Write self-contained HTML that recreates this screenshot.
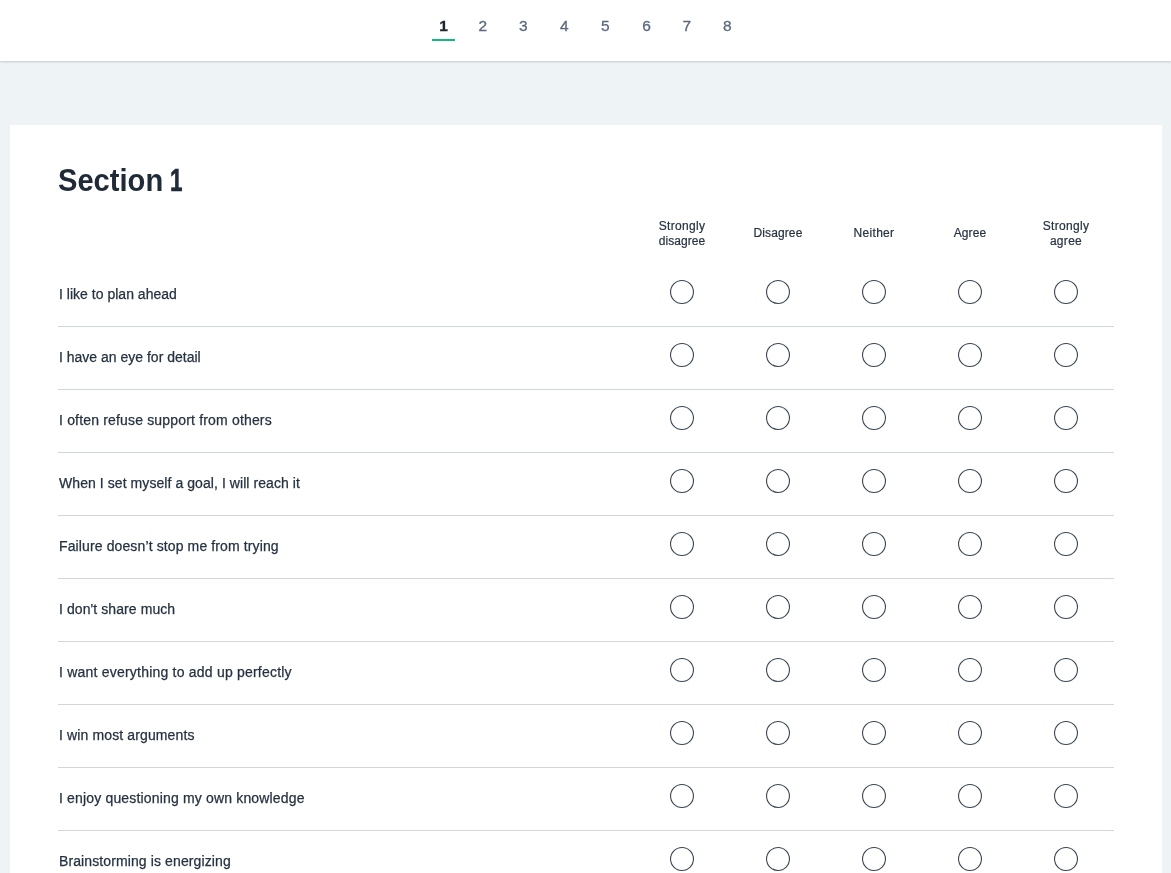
<!DOCTYPE html>
<html lang="en">
<head>
<meta charset="utf-8">
<title>Section 1</title>
<style>
*{box-sizing:border-box;margin:0;padding:0}
html,body{width:100%;height:100%}
body{background:#eef3f6;font-family:"Liberation Sans",Arial,sans-serif;color:#253241;overflow:hidden;position:relative}
.top{position:absolute;left:0;top:0;width:100%;height:61px;background:#fff;box-shadow:0 1px 2px rgba(0,0,0,.18)}
.nav{position:absolute;left:0;top:0;height:61px;width:100%;will-change:transform}
.nav a{position:absolute;top:16px;height:20px;line-height:20px;font-size:15.5px;color:#5a6a7e;text-align:center;text-decoration:none;width:30px;margin-left:-15px;-webkit-text-stroke:.3px currentColor}
.nav a.on{color:#1d2733;font-weight:bold}
.nav i{position:absolute;left:432px;top:39px;width:23px;height:2px;background:#10b981}
.gl{position:absolute;left:0;top:0;width:100%;height:100%;will-change:transform}
.card{position:absolute;left:10px;top:125px;width:1152px;height:900px;background:#fff}
h1{position:absolute;left:48px;top:36px;font-size:32px;line-height:38px;font-weight:bold;color:#212b38;white-space:nowrap;}
h1 span{display:inline-block;transform-origin:0 0}
h1 .sa{transform:scaleX(.91)}
h1 .sb{transform:scaleX(.7);margin-left:-12px;-webkit-text-stroke:.7px #212b38}
.cols{position:absolute;left:0;top:0}
.cols span{position:absolute;width:96px;margin-left:-48px;text-align:center;font-size:12px;line-height:15px;letter-spacing:.3px;color:#253241;-webkit-text-stroke:.2px #253241}
.cols em{font-style:normal}
.row{position:absolute;left:48px;width:1056px;height:63px;border-bottom:1px solid #cfd6de}
.row p{position:absolute;left:1px;top:20px;font-size:14px;line-height:20px;white-space:nowrap;color:#253241;-webkit-text-stroke:.25px #253241}
.row svg{position:absolute;left:611px;top:15px;fill:none;stroke:#394653;stroke-width:1.1}
</style>
</head>
<body>
<div class="top">
  <div class="nav">
    <a class="on" style="left:443.5px">1</a>
    <a style="left:482.8px">2</a>
    <a style="left:523.4px">3</a>
    <a style="left:564.3px">4</a>
    <a style="left:605.2px">5</a>
    <a style="left:646.5px">6</a>
    <a style="left:686.7px">7</a>
    <a style="left:727.3px">8</a>
    <i></i>
  </div>
</div>
<div class="card"><div class="gl">
  <h1><span class="sa">Section</span> <span class="sb">1</span></h1>
  <div class="cols">
    <span style="left:672px;top:94px">Strongly<br><em style="letter-spacing:.05px">disagree</em></span>
    <span style="left:768px;top:100.5px;letter-spacing:.1px">Disagree</span>
    <span style="left:864px;top:100.5px">Neither</span>
    <span style="left:960px;top:100.5px;letter-spacing:.1px">Agree</span>
    <span style="left:1056px;top:94px">Strongly<br>agree</span>
  </div>
  <div class="row" style="top:139px"><p style="letter-spacing:0.016px">I like to plan ahead</p><svg width="480" height="26" viewBox="0 0 480 26"><circle cx="13" cy="13" r="11.45"/><circle cx="109" cy="13" r="11.45"/><circle cx="205" cy="13" r="11.45"/><circle cx="301" cy="13" r="11.45"/><circle cx="397" cy="13" r="11.45"/></svg></div>
  <div class="row" style="top:202px"><p style="letter-spacing:0.000px">I have an eye for detail</p><svg width="480" height="26" viewBox="0 0 480 26"><circle cx="13" cy="13" r="11.45"/><circle cx="109" cy="13" r="11.45"/><circle cx="205" cy="13" r="11.45"/><circle cx="301" cy="13" r="11.45"/><circle cx="397" cy="13" r="11.45"/></svg></div>
  <div class="row" style="top:265px"><p style="letter-spacing:0.173px">I often refuse support from others</p><svg width="480" height="26" viewBox="0 0 480 26"><circle cx="13" cy="13" r="11.45"/><circle cx="109" cy="13" r="11.45"/><circle cx="205" cy="13" r="11.45"/><circle cx="301" cy="13" r="11.45"/><circle cx="397" cy="13" r="11.45"/></svg></div>
  <div class="row" style="top:328px"><p style="letter-spacing:0.070px">When I set myself a goal, I will reach it</p><svg width="480" height="26" viewBox="0 0 480 26"><circle cx="13" cy="13" r="11.45"/><circle cx="109" cy="13" r="11.45"/><circle cx="205" cy="13" r="11.45"/><circle cx="301" cy="13" r="11.45"/><circle cx="397" cy="13" r="11.45"/></svg></div>
  <div class="row" style="top:391px"><p style="letter-spacing:0.121px">Failure doesn’t stop me from trying</p><svg width="480" height="26" viewBox="0 0 480 26"><circle cx="13" cy="13" r="11.45"/><circle cx="109" cy="13" r="11.45"/><circle cx="205" cy="13" r="11.45"/><circle cx="301" cy="13" r="11.45"/><circle cx="397" cy="13" r="11.45"/></svg></div>
  <div class="row" style="top:454px"><p style="letter-spacing:0.082px">I don't share much</p><svg width="480" height="26" viewBox="0 0 480 26"><circle cx="13" cy="13" r="11.45"/><circle cx="109" cy="13" r="11.45"/><circle cx="205" cy="13" r="11.45"/><circle cx="301" cy="13" r="11.45"/><circle cx="397" cy="13" r="11.45"/></svg></div>
  <div class="row" style="top:517px"><p style="letter-spacing:0.214px">I want everything to add up perfectly</p><svg width="480" height="26" viewBox="0 0 480 26"><circle cx="13" cy="13" r="11.45"/><circle cx="109" cy="13" r="11.45"/><circle cx="205" cy="13" r="11.45"/><circle cx="301" cy="13" r="11.45"/><circle cx="397" cy="13" r="11.45"/></svg></div>
  <div class="row" style="top:580px"><p style="letter-spacing:0.126px">I win most arguments</p><svg width="480" height="26" viewBox="0 0 480 26"><circle cx="13" cy="13" r="11.45"/><circle cx="109" cy="13" r="11.45"/><circle cx="205" cy="13" r="11.45"/><circle cx="301" cy="13" r="11.45"/><circle cx="397" cy="13" r="11.45"/></svg></div>
  <div class="row" style="top:643px"><p style="letter-spacing:0.166px">I enjoy questioning my own knowledge</p><svg width="480" height="26" viewBox="0 0 480 26"><circle cx="13" cy="13" r="11.45"/><circle cx="109" cy="13" r="11.45"/><circle cx="205" cy="13" r="11.45"/><circle cx="301" cy="13" r="11.45"/><circle cx="397" cy="13" r="11.45"/></svg></div>
  <div class="row" style="top:706px"><p style="letter-spacing:0.108px">Brainstorming is energizing</p><svg width="480" height="26" viewBox="0 0 480 26"><circle cx="13" cy="13" r="11.45"/><circle cx="109" cy="13" r="11.45"/><circle cx="205" cy="13" r="11.45"/><circle cx="301" cy="13" r="11.45"/><circle cx="397" cy="13" r="11.45"/></svg></div>
</div></div>
</body>
</html>
